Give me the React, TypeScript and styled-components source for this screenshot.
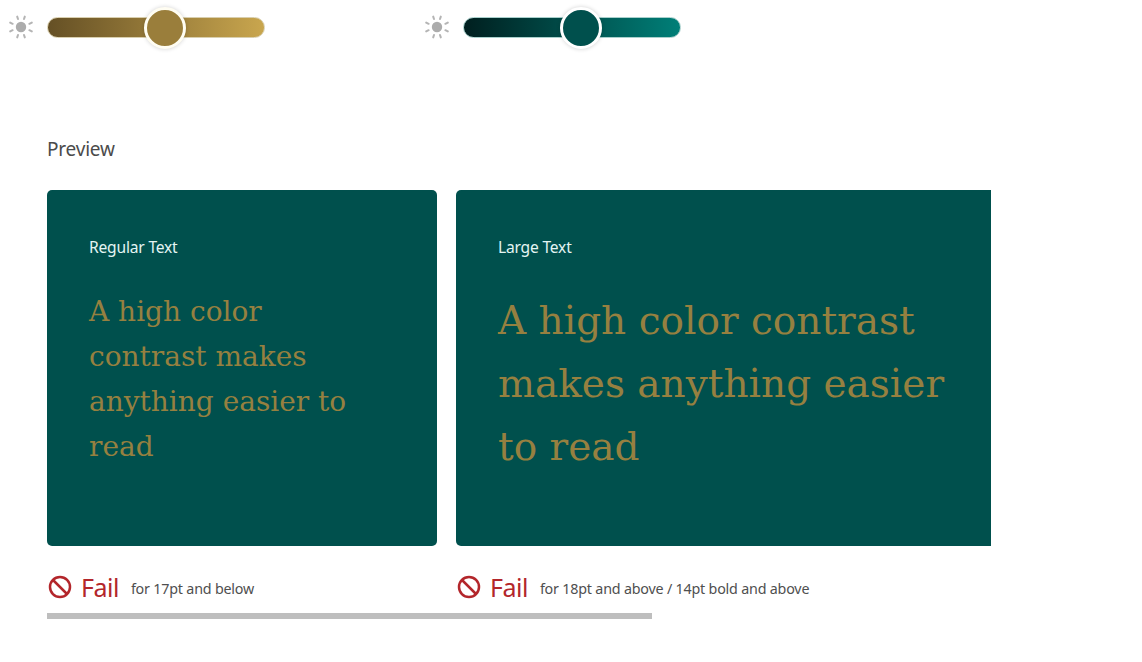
import React from 'react';
import styled, { createGlobalStyle } from 'styled-components';

const Global = createGlobalStyle`
  html, body {
    margin: 0;
    background: #fff;
    overflow: hidden;
  }
  body {
    font-family: "Noto Sans", "Open Sans", sans-serif;
  }
`;

const Page = styled.div`
  width: 1142px;
  height: 662px;
  box-sizing: border-box;
  padding: 6px 0 0 9px;
`;

const Sliders = styled.div`
  display: flex;
`;

const SliderGroup = styled.div`
  width: 416px;
  height: 42px;
  display: flex;
  align-items: center;
  gap: 14px;
`;

const Track = styled.div<{ $from: string; $to: string; $edge: string }>`
  position: relative;
  width: 218px;
  height: 21px;
  box-sizing: border-box;
  border-radius: 11px;
  border: 1px solid ${p => p.$edge};
  background: linear-gradient(to right, ${p => p.$from}, ${p => p.$to});
`;

const Thumb = styled.div<{ $color: string; $ring: string }>`
  position: absolute;
  left: 96px;
  top: -11px;
  width: 42px;
  height: 42px;
  box-sizing: border-box;
  border-radius: 50%;
  background: ${p => p.$color};
  border: 3px solid ${p => p.$ring};
  box-shadow: 0 0 4px rgba(0, 0, 0, 0.18);
`;

const Preview = styled.section`
  margin: 88px 0 0 38px;
  width: 944px;
`;

const Heading = styled.h2`
  margin: 0;
  font-size: 19px;
  line-height: 26px;
  font-weight: 400;
  color: #4b4b4b;
  letter-spacing: -0.2px;
`;

const Scroller = styled.div`
  margin-top: 28px;
  overflow: hidden;
`;

const Columns = styled.div`
  display: flex;
  gap: 19px;
  width: max-content;
`;

const Column = styled.div`
  display: flex;
  flex-direction: column;
`;

const Card = styled.div<{ $width: number }>`
  width: ${p => p.$width}px;
  height: 356px;
  box-sizing: border-box;
  padding: 46px 42px 0;
  border-radius: 5px;
  background: #00504d;
`;

const Label = styled.div`
  font-size: 15.6px;
  line-height: 22px;
  color: #e4f5f3;
  letter-spacing: -0.2px;
`;

const Sample = styled.p<{ $size: number; $line: number; $wrap: number }>`
  margin: 31px 0 0;
  max-width: ${p => p.$wrap}px;
  font-family: "DejaVu Serif", "Liberation Serif", serif;
  font-size: ${p => p.$size}px;
  line-height: ${p => p.$line}px;
  color: #968040;
`;

const Verdict = styled.div`
  display: flex;
  align-items: center;
  height: 42px;
  margin-top: 20px;
  padding-left: 1px;
`;

const FailWord = styled.span`
  margin-left: 9px;
  font-size: 25px;
  color: #b3262b;
  letter-spacing: -0.5px;
`;

const Note = styled.span`
  margin-left: 12px;
  margin-top: 2px;
  font-size: 14.3px;
  color: #4f4f4f;
  letter-spacing: -0.2px;
`;

const ScrollThumb = styled.div`
  width: 605px;
  height: 6px;
  margin-top: 5px;
  background: #bebebe;
`;

const Sun = () => (
  <svg width="24" height="24" viewBox="0 0 24 24" fill="none">
    <circle cx="12" cy="12" r="5.2" fill="#acacac" />
    <g stroke="#b4b4b4" strokeWidth="2" strokeLinecap="round">
      <path d="M8.2 1.6 9 4" />
      <path d="M15.8 1.6 15 4" />
      <path d="M1.2 7.6 3.6 8.8" />
      <path d="M22.8 7.6 20.4 8.8" />
      <path d="M1.2 16.4 3.6 15.2" />
      <path d="M22.8 16.4 20.4 15.2" />
      <path d="M8.2 22.4 9 20" />
      <path d="M15.8 22.4 15 20" />
    </g>
  </svg>
);

const NoEntry = () => (
  <svg width="24" height="24" viewBox="0 0 24 24" fill="none" stroke="#b3262b" strokeWidth="2.5">
    <circle cx="12" cy="12" r="10" />
    <path d="M5 5 19 19" />
  </svg>
);

const sliders = [
  { from: '#655025', to: '#c9a64e', edge: '#d9cfae', thumb: '#9a7e3b', ring: '#fffdf2' },
  { from: '#001f1f', to: '#007f78', edge: '#a8d0cc', thumb: '#00504d', ring: '#ffffff' },
];

const previews = [
  { title: 'Regular Text', width: 390, size: 28, line: 45, wrap: 280, note: 'for 17pt and below' },
  { title: 'Large Text', width: 640, size: 39, line: 63, wrap: 470, note: 'for 18pt and above / 14pt bold and above' },
];

const App: React.FC = () => (
  <Page>
    <Global />
    <Sliders>
      {sliders.map(s => (
        <SliderGroup key={s.from}>
          <Sun />
          <Track $from={s.from} $to={s.to} $edge={s.edge}>
            <Thumb $color={s.thumb} $ring={s.ring} />
          </Track>
        </SliderGroup>
      ))}
    </Sliders>
    <Preview>
      <Heading>Preview</Heading>
      <Scroller>
        <Columns>
          {previews.map(p => (
            <Column key={p.title}>
              <Card $width={p.width}>
                <Label>{p.title}</Label>
                <Sample $size={p.size} $line={p.line} $wrap={p.wrap}>
                  A high color contrast makes anything easier to read
                </Sample>
              </Card>
              <Verdict>
                <NoEntry />
                <FailWord>Fail</FailWord>
                <Note>{p.note}</Note>
              </Verdict>
            </Column>
          ))}
        </Columns>
      </Scroller>
      <ScrollThumb />
    </Preview>
  </Page>
);

export default App;
